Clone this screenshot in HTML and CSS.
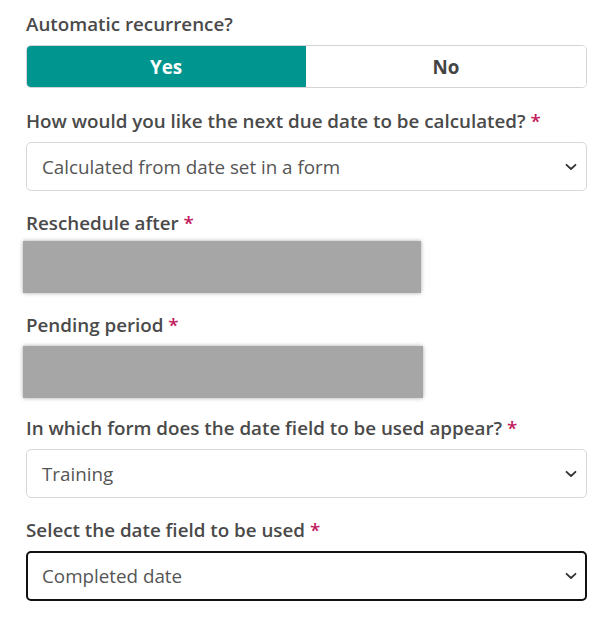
FILE: index.html
```html
<!DOCTYPE html>
<html lang="en">
<head>
<meta charset="utf-8">
<title>Recurrence settings</title>
<link rel="stylesheet" href="styles.css">
</head>
<body>
<main class="form">
  <section class="group group-first">
    <div class="label">Automatic recurrence?</div>
    <div class="toggle">
      <button class="opt opt-on" type="button">Yes</button>
      <button class="opt" type="button">No</button>
    </div>
  </section>

  <section class="group">
    <div class="label">How would you like the next due date to be calculated? <span class="req">*</span></div>
    <div class="select">
      <span class="select-text">Calculated from date set in a form</span>
      <svg class="chev" width="12" height="8" viewBox="0 0 12 8"><path d="M1.5 1.8 L6 6 L10.5 1.8" fill="none" stroke="#333" stroke-width="1.8" stroke-linecap="round" stroke-linejoin="round"/></svg>
    </div>
  </section>

  <section class="group">
    <div class="label label-tight">Reschedule after <span class="req">*</span></div>
    <div class="redact"></div>
  </section>

  <section class="group group-pending">
    <div class="label label-mid">Pending period <span class="req">*</span></div>
    <div class="redact redact-wide"></div>
  </section>

  <section class="group">
    <div class="label">In which form does the date field to be used appear? <span class="req">*</span></div>
    <div class="select">
      <span class="select-text">Training</span>
      <svg class="chev" width="12" height="8" viewBox="0 0 12 8"><path d="M1.5 1.8 L6 6 L10.5 1.8" fill="none" stroke="#333" stroke-width="1.8" stroke-linecap="round" stroke-linejoin="round"/></svg>
    </div>
  </section>

  <section class="group">
    <div class="label">Select the date field to be used <span class="req">*</span></div>
    <div class="select select-focus">
      <span class="select-text">Completed date</span>
      <svg class="chev" width="12" height="8" viewBox="0 0 12 8"><path d="M1.5 1.8 L6 6 L10.5 1.8" fill="none" stroke="#333" stroke-width="1.8" stroke-linecap="round" stroke-linejoin="round"/></svg>
    </div>
  </section>
</main>
</body>
</html>
```

FILE: styles.css
```css
html, body {
  margin: 0;
  padding: 0;
  background: #ffffff;
}

body {
  font-family: "Open Sans", "Noto Sans", "Liberation Sans", sans-serif;
  color: #4a4a4a;
}

.form {
  width: 561px;
  padding: 12px 0 0 26px;
  display: flex;
  flex-direction: column;
  gap: 20px;
}

.group {
  display: flex;
  flex-direction: column;
}

.group-first {
  margin-bottom: 1px;
}

.group-pending {
  margin-bottom: -2px;
}

.label {
  font-size: 18.8px;
  line-height: 24px;
  font-weight: 600;
  color: #4a4a4a;
  margin-bottom: 9px;
}

.label-tight {
  margin-bottom: 6px;
}

.label-mid {
  margin-bottom: 9px;
}

.req {
  color: #c2185b;
}

.toggle {
  display: flex;
  height: 43px;
  border: 1px solid #d4d4d4;
  border-radius: 5px;
  box-sizing: border-box;
  overflow: hidden;
}

.opt {
  flex: 1 1 0;
  border: 0;
  margin: 0;
  padding: 0;
  background: #ffffff;
  font-family: inherit;
  font-size: 18.8px;
  font-weight: 700;
  color: #444444;
}

.opt-on {
  background: #00968f;
  color: #ffffff;
  margin: -1px 0 -1px -1px;
}

.select {
  height: 49px;
  box-sizing: border-box;
  border: 1px solid #d8d8d8;
  border-radius: 5px;
  display: flex;
  align-items: center;
  justify-content: space-between;
  padding: 0 9px 0 15px;
  background: #ffffff;
}

.select-text {
  font-size: 18.8px;
  color: #555555;
}

.select-focus {
  border: 2px solid #111111;
  padding: 0 8px 0 14px;
  height: 50px;
}

.chev {
  display: block;
}

.redact {
  width: 398px;
  height: 52px;
  margin-left: -3px;
  background: #a6a6a6;
  box-shadow: 0 0 4px rgba(0, 0, 0, 0.35);
}

.redact-wide {
  width: 400px;
}
```
